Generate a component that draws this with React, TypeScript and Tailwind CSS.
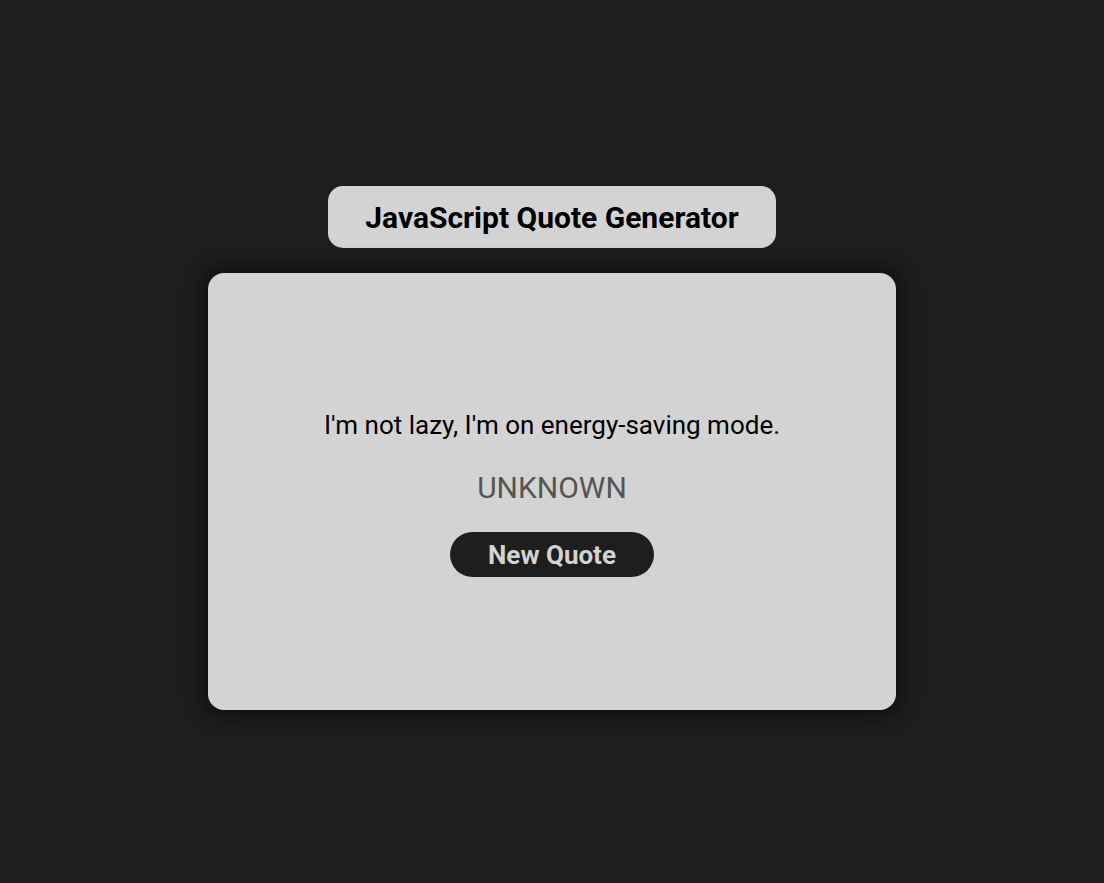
import React from "react";

export default function App() {
  return (
    <div
      className="min-h-screen w-full bg-[#1e1e1e] flex flex-col items-center pt-[186px]"
      style={{ fontFamily: "Roboto, 'Noto Sans', sans-serif" }}
    >
      <h1 className="w-[448px] h-[62px] rounded-[15px] bg-[#d3d3d3] flex items-center justify-center text-[30px] font-bold text-black">
        JavaScript Quote Generator
      </h1>
      <div className="mt-[25px] w-[688px] h-[437px] rounded-[16px] bg-[#d3d3d3] shadow-[0_0_20px_8px_rgba(0,0,0,0.45)] flex flex-col items-center justify-center pt-[3px]">
        <p className="text-[26px] text-black leading-[32px]">I'm not lazy, I'm on energy-saving mode.</p>
        <p className="mt-[29px] text-[30px] text-[#555555] leading-[36px]">UNKNOWN</p>
        <button className="mt-[26px] w-[204px] h-[45px] pt-[2px] rounded-full bg-[#1e1e1e] text-[#d3d3d3] text-[26px] font-bold">
          New Quote
        </button>
      </div>
    </div>
  );
}
